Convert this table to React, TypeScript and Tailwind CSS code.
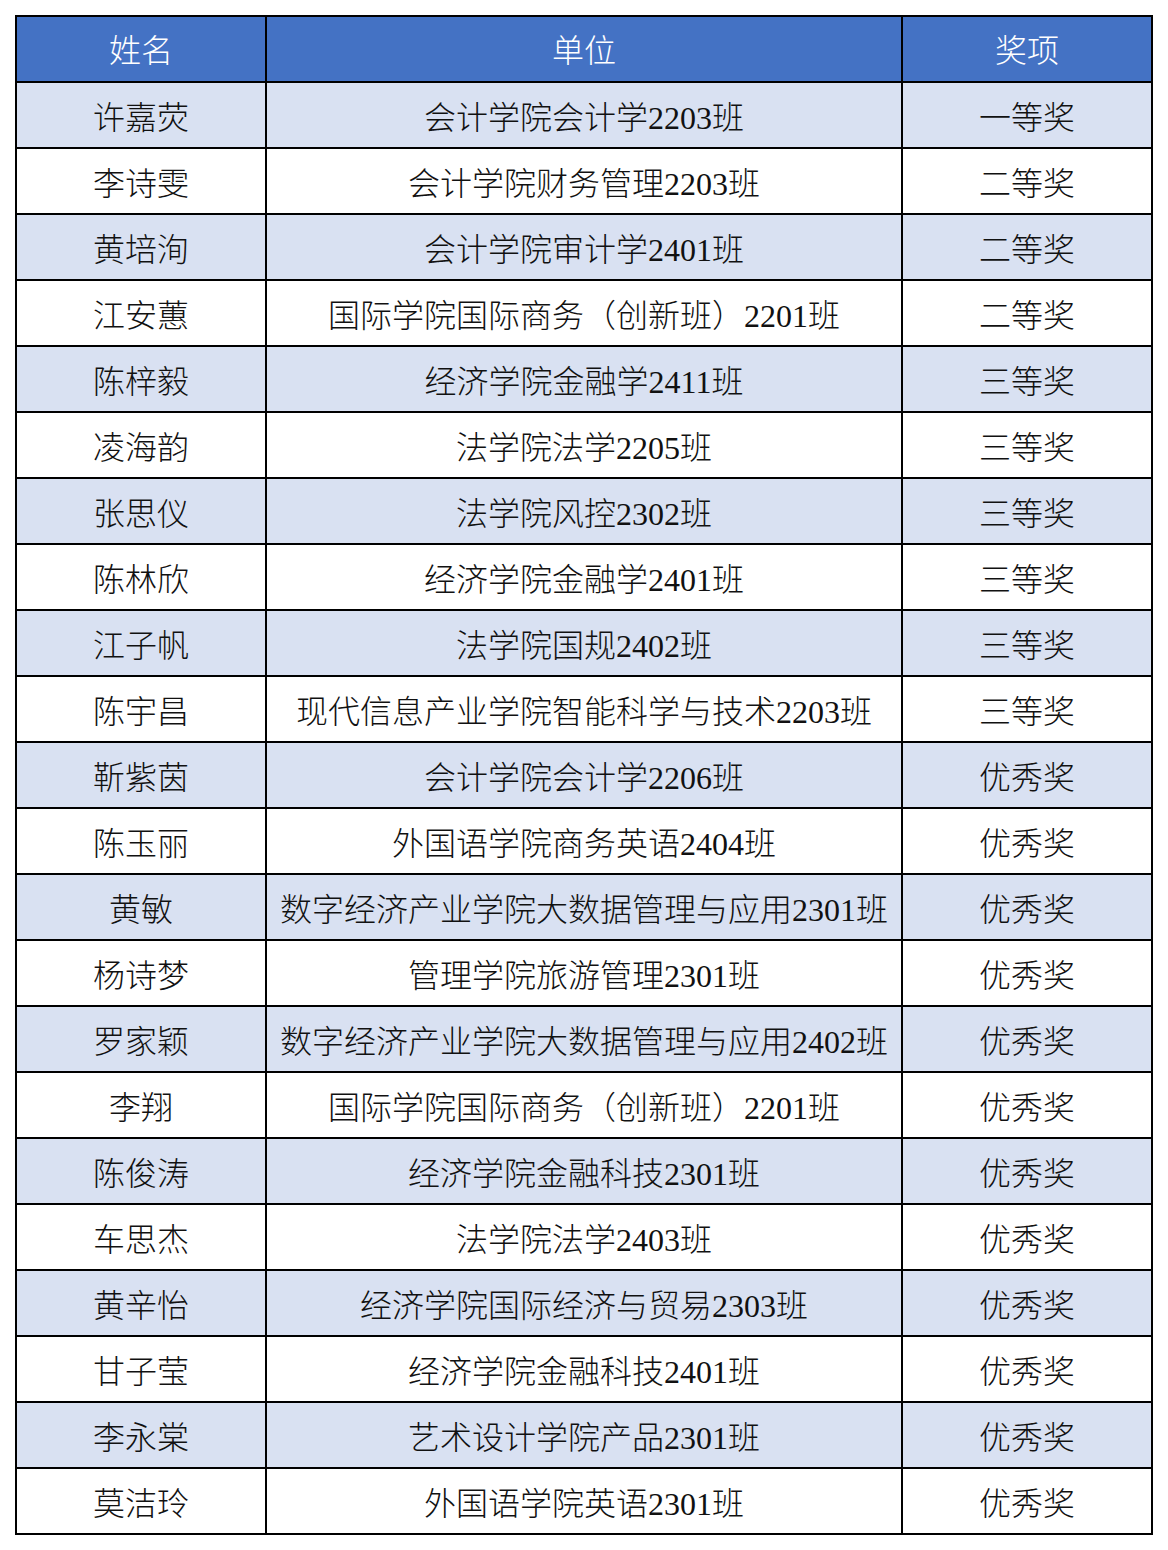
import React from "react";

const rows: [string, string, string][] = [
  ["许嘉荧", "会计学院会计学2203班", "一等奖"],
  ["李诗雯", "会计学院财务管理2203班", "二等奖"],
  ["黄培洵", "会计学院审计学2401班", "二等奖"],
  ["江安蕙", "国际学院国际商务（创新班）2201班", "二等奖"],
  ["陈梓毅", "经济学院金融学2411班", "三等奖"],
  ["凌海韵", "法学院法学2205班", "三等奖"],
  ["张思仪", "法学院风控2302班", "三等奖"],
  ["陈林欣", "经济学院金融学2401班", "三等奖"],
  ["江子帆", "法学院国规2402班", "三等奖"],
  ["陈宇昌", "现代信息产业学院智能科学与技术2203班", "三等奖"],
  ["靳紫茵", "会计学院会计学2206班", "优秀奖"],
  ["陈玉丽", "外国语学院商务英语2404班", "优秀奖"],
  ["黄敏", "数字经济产业学院大数据管理与应用2301班", "优秀奖"],
  ["杨诗梦", "管理学院旅游管理2301班", "优秀奖"],
  ["罗家颖", "数字经济产业学院大数据管理与应用2402班", "优秀奖"],
  ["李翔", "国际学院国际商务（创新班）2201班", "优秀奖"],
  ["陈俊涛", "经济学院金融科技2301班", "优秀奖"],
  ["车思杰", "法学院法学2403班", "优秀奖"],
  ["黄辛怡", "经济学院国际经济与贸易2303班", "优秀奖"],
  ["甘子莹", "经济学院金融科技2401班", "优秀奖"],
  ["李永棠", "艺术设计学院产品2301班", "优秀奖"],
  ["莫洁玲", "外国语学院英语2301班", "优秀奖"],
];

const font = {
  fontFamily: '"Liberation Serif", "Noto Sans CJK SC", serif',
};

export default function App() {
  return (
    <div className="w-[1168px] h-[1550px] bg-white pt-[15px] pl-[15px]" style={font}>
      <div className="w-[1138px] border-l-2 border-t-2 border-black">
        <div className="flex h-[66px] bg-[#4472C4] text-white text-[32px] font-light">
          <div className="w-[250px] pt-[4px] border-r-2 border-b-2 border-black flex items-center justify-center">姓名</div>
          <div className="w-[636px] pt-[4px] border-r-2 border-b-2 border-black flex items-center justify-center">单位</div>
          <div className="w-[250px] pt-[4px] border-r-2 border-b-2 border-black flex items-center justify-center">奖项</div>
        </div>
        {rows.map((r, i) => (
          <div
            key={i}
            className={
              "flex h-[66px] text-[32px] font-light text-[#111] " +
              (i % 2 === 0 ? "bg-[#D9E1F2]" : "bg-white")
            }
          >
            <div className="w-[250px] pt-[5px] border-r-2 border-b-2 border-black flex items-center justify-center whitespace-nowrap">{r[0]}</div>
            <div className="w-[636px] pt-[5px] border-r-2 border-b-2 border-black flex items-center justify-center whitespace-nowrap">{r[1]}</div>
            <div className="w-[250px] pt-[5px] border-r-2 border-b-2 border-black flex items-center justify-center whitespace-nowrap">{r[2]}</div>
          </div>
        ))}
      </div>
    </div>
  );
}
